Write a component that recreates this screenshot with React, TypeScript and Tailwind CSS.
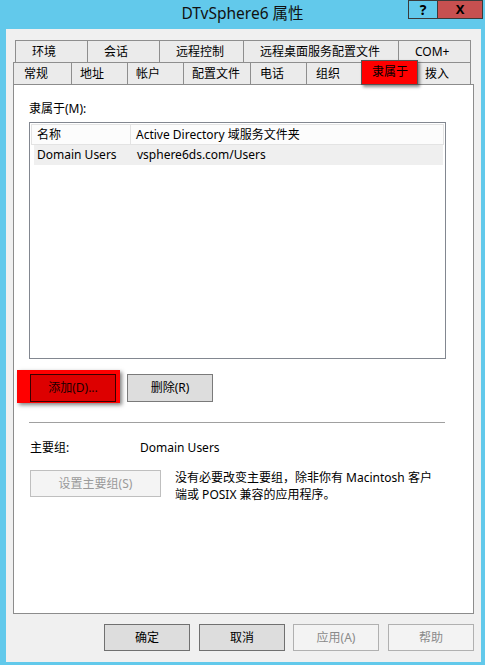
import React from "react";

const font = { fontFamily: '"Noto Sans", "Noto Sans CJK SC", sans-serif' };

function Tab({ w, pl, label }: { w: string; pl: string; label: string }) {
  return (
    <div className={`${w} ${pl} h-full border-t border-l border-[#8e8e8e] bg-[#ebebeb] flex items-center text-[12px] text-black whitespace-nowrap`}>
      {label}
    </div>
  );
}

export default function App() {
  return (
    <div className="w-[485px] h-[665px] bg-[#62c9eb] flex flex-col overflow-hidden" style={font}>
      {/* Title bar */}
      <div className="h-[29px] grid grid-cols-[1fr_auto_1fr] shrink-0">
        <div />
        <div className="text-[15.5px] text-[#111] leading-[27px]">DTvSphere6 属性</div>
        <div className="flex justify-end items-start pr-[2px]">
          <div className="w-[29px] h-[19px] border border-[#3a3a3a] border-r-0 flex items-center justify-center text-[14px] font-bold text-black leading-none">?</div>
          <div className="w-[46px] h-[19px] border border-[#3a3a3a] bg-[#c75050] flex items-center justify-center text-[13px] font-bold text-black leading-none">X</div>
        </div>
      </div>

      {/* Client */}
      <div className="ml-[6px] w-[475px] h-[633px] bg-[#f0f0f0] pl-[7px] pt-[11px] flex flex-col shrink-0">
        {/* Tab row 1 */}
        <div className="ml-[2px] flex h-[22px]">
          <Tab w="w-[72px]" pl="pl-[16px]" label="环境" />
          <Tab w="w-[72px]" pl="pl-[16px]" label="会话" />
          <Tab w="w-[84px]" pl="pl-[16px]" label="远程控制" />
          <Tab w="w-[155px]" pl="pl-[16px]" label="远程桌面服务配置文件" />
          <div className="w-[73px] pl-[16px] h-full border-t border-l border-r border-[#8e8e8e] bg-[#ebebeb] flex items-center text-[12px] text-black">COM+</div>
        </div>
        {/* Tab row 2 */}
        <div className="flex h-[22px] items-start">
          <Tab w="w-[58px]" pl="pl-[10px]" label="常规" />
          <Tab w="w-[56px]" pl="pl-[8px]" label="地址" />
          <Tab w="w-[56px]" pl="pl-[8px]" label="帐户" />
          <Tab w="w-[67px]" pl="pl-[8px]" label="配置文件" />
          <Tab w="w-[56px]" pl="pl-[9px]" label="电话" />
          <Tab w="w-[55px]" pl="pl-[9px]" label="组织" />
          <div className="relative z-10 w-[57px] h-[25px] -mt-[2px] pl-[10px] pb-[2px] border border-[#555] bg-[#ff0000] shadow-[2px_2px_3px_rgba(0,0,0,0.45)] flex items-center text-[12px] text-black">隶属于</div>
          <div className="w-[53px] pl-[7px] h-full border-t border-r border-[#8e8e8e] bg-[#ebebeb] flex items-center text-[12px] text-black">拨入</div>
        </div>

        {/* Panel */}
        <div className="w-[461px] h-[530px] border border-[#8c8c8c] bg-white pl-[15px] pt-[16px] flex flex-col text-[12px] text-black">
          <div className="leading-[16px]">隶属于(M):</div>
          <div className="mt-[5px] w-[417px] h-[237px] border border-[#828790] p-[1px] flex flex-col">
            <div className="h-[21px] border border-[#e3e3e3] bg-[#fcfcfc] flex items-center">
              <div className="w-[99px] h-full border-r border-[#e3e3e3] pl-[5px] flex items-center">名称</div>
              <div className="pl-[5px]">Active Directory 域服务文件夹</div>
            </div>
            <div className="ml-[3px] mr-[1px] h-[20px] bg-[#efefef] flex items-center">
              <div className="w-[103px] pl-[3px]">Domain Users</div>
              <div>vsphere6ds.com/Users</div>
            </div>
          </div>

          {/* Add / Remove */}
          <div className="mt-[11px] flex items-start">
            <div className="-ml-[12px] w-[103px] h-[33px] bg-[#ff0000] pl-[13px] pt-[4px] shadow-[2px_2px_4px_rgba(0,0,0,0.5)]">
              <div className="w-[86px] h-[28px] border border-[#3a0000] bg-[#dd0000] flex items-center justify-center text-[#1a0000]">添加(D)...</div>
            </div>
            <div className="ml-[7px] mt-[4px] w-[86px] h-[28px] border border-[#7a7a7a] bg-[#dddddd] flex items-center justify-center">删除(R)</div>
          </div>

          <div className="mt-[19px] w-[416px] h-px bg-[#a0a0a0]" />

          <div className="mt-[17px] flex leading-[16px]">
            <div className="w-[111px] pl-[1px]">主要组:</div>
            <div>Domain Users</div>
          </div>

          <div className="mt-[14px] flex items-start">
            <div className="ml-[1px] w-[131px] h-[27px] border border-[#bfbfbf] bg-[#f4f4f4] flex items-center justify-center text-[#9a9a9a]">设置主要组(S)</div>
            <div className="ml-[14px] -mt-[1px] leading-[17px]">
              没有必要改变主要组，除非你有 Macintosh 客户<br />端或 POSIX 兼容的应用程序。
            </div>
          </div>
        </div>

        {/* Bottom buttons */}
        <div className="mt-[10px] flex text-[12px]">
          <div className="ml-[91px] w-[86px] h-[27px] border border-[#707070] bg-[#dddddd] flex items-center justify-center text-black">确定</div>
          <div className="ml-[9px] w-[86px] h-[27px] border border-[#707070] bg-[#dddddd] flex items-center justify-center text-black">取消</div>
          <div className="ml-[8px] w-[86px] h-[27px] border border-[#b0b0b0] bg-[#f3f3f3] flex items-center justify-center text-[#8a8a8a]">应用(A)</div>
          <div className="ml-[9px] w-[86px] h-[27px] border border-[#b0b0b0] bg-[#f3f3f3] flex items-center justify-center text-[#8a8a8a]">帮助</div>
        </div>
      </div>
    </div>
  );
}
